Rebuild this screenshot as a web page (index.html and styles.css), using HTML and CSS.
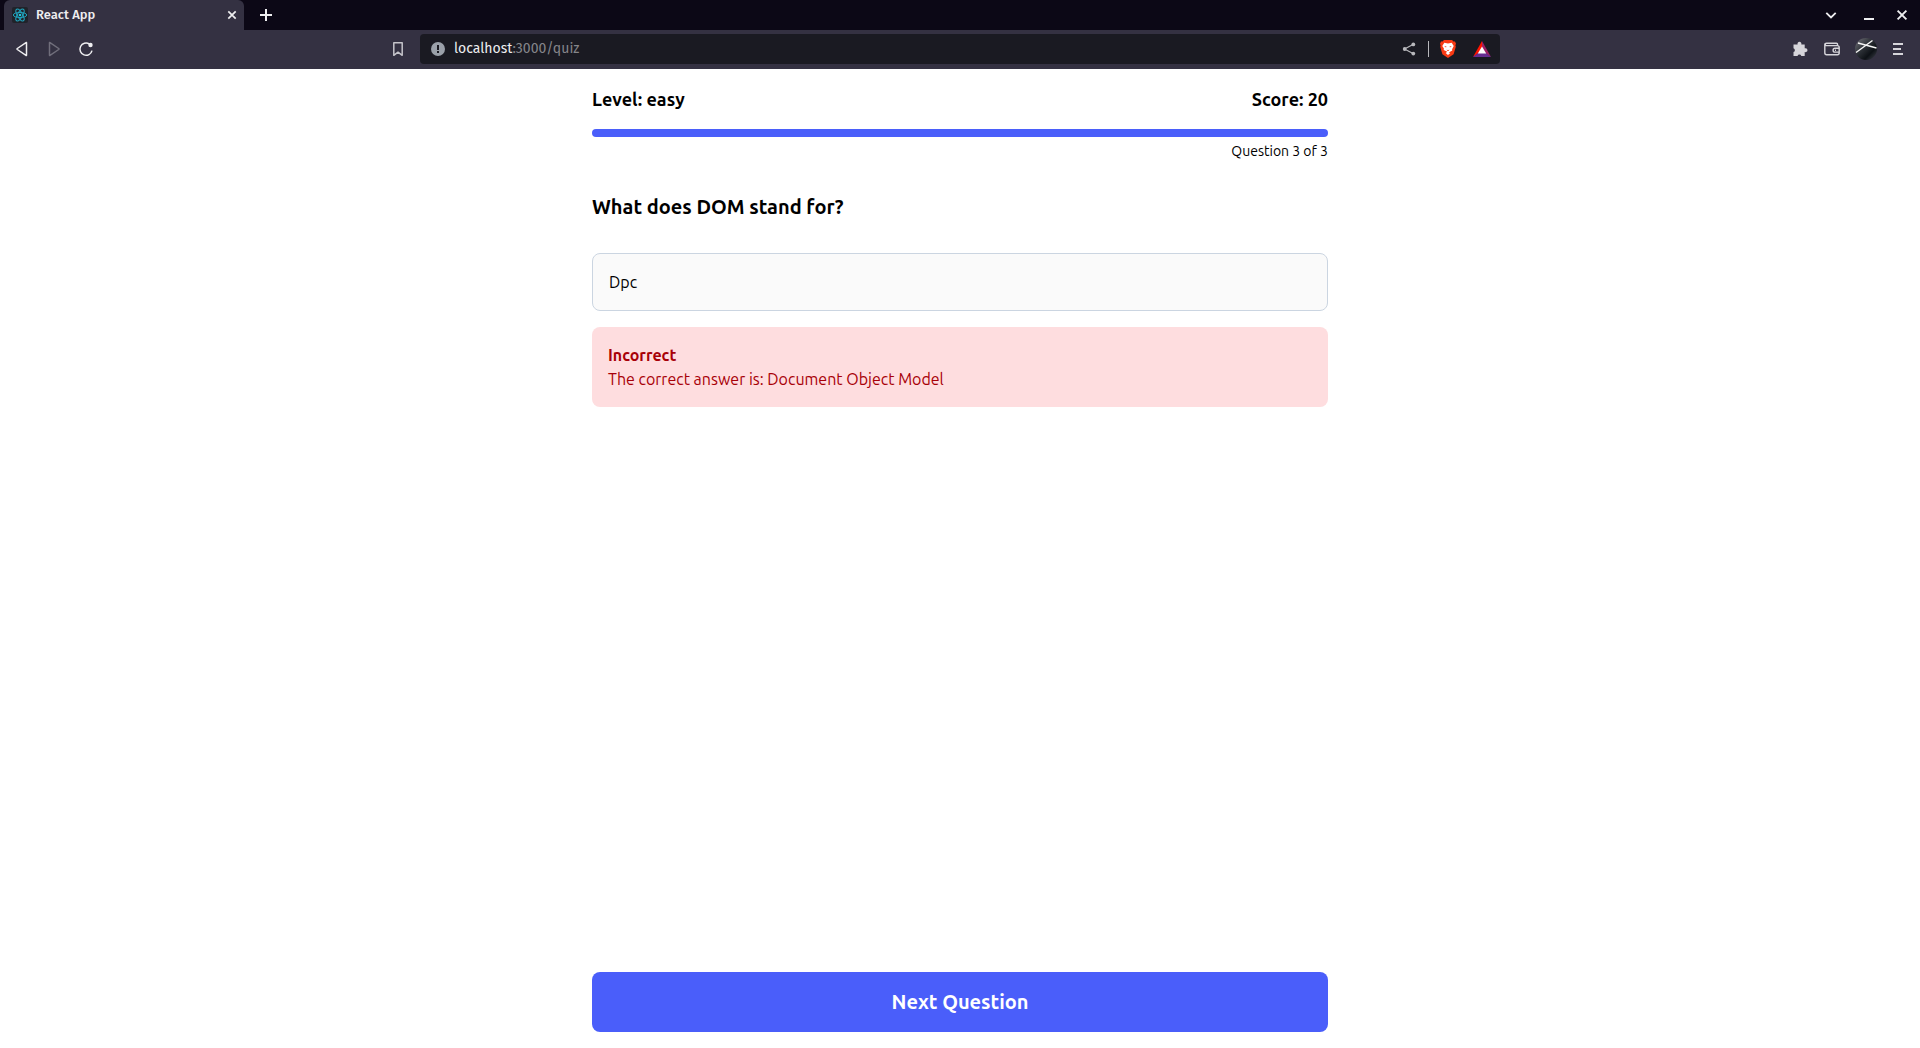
FILE: index.html
```
<!DOCTYPE html>
<html lang="en">
<head>
<meta charset="utf-8">
<meta name="viewport" content="width=device-width, initial-scale=1">
<title>React App</title>
<link rel="stylesheet" href="styles.css">
</head>
<body>
<header class="browser">
  <div class="tab-strip">
    <div class="tab">
      <svg class="favicon" width="16" height="16" viewBox="0 0 16 16" fill="none" stroke="#20a5bf" aria-hidden="true">
        <rect width="16" height="16" rx="2" fill="#20232a" stroke="none"/>
        <ellipse cx="8" cy="8" rx="6.7" ry="2.6"/>
        <ellipse cx="8" cy="8" rx="6.7" ry="2.6" transform="rotate(60 8 8)"/>
        <ellipse cx="8" cy="8" rx="6.7" ry="2.6" transform="rotate(120 8 8)"/>
        <circle cx="8" cy="8" r="1.3" fill="#20c5df" stroke="none"/>
      </svg>
      <span class="tab-title">React App</span>
      <button class="icon-button tab-close" aria-label="Close tab">
        <svg width="10" height="10" viewBox="0 0 10 10" fill="none" stroke="currentColor" stroke-width="1.7"><path d="M1.3 1.3l7.4 7.4M8.7 1.3L1.3 8.7"/></svg>
      </button>
    </div>
    <button class="icon-button new-tab" aria-label="New tab">
      <svg width="12" height="12" viewBox="0 0 12 12" fill="none" stroke="currentColor" stroke-width="2"><path d="M6 0v12M0 6h12"/></svg>
    </button>
    <div class="window-controls">
      <button class="icon-button" aria-label="Search tabs">
        <svg width="12" height="12" viewBox="0 0 12 12" fill="none" stroke="currentColor" stroke-width="1.8"><path d="M1.3 3.8L6 8.5l4.700-4.700"/></svg>
      </button>
      <button class="icon-button minimise" aria-label="Minimise">
        <svg width="12" height="12" viewBox="0 0 12 12" fill="currentColor"><path d="M1 9h10v2H1z"/></svg>
      </button>
      <button class="icon-button" aria-label="Close window">
        <svg width="12" height="12" viewBox="0 0 12 12" fill="none" stroke="currentColor" stroke-width="1.9"><path d="M1.600 1.600l8.800 8.800M10.400 1.600l-8.800 8.800"/></svg>
      </button>
    </div>
  </div>
  <div class="toolbar">
    <div class="navigation">
      <button class="icon-button" aria-label="Back">
        <svg width="16" height="16" viewBox="0 0 16 16" fill="none" stroke="currentColor" stroke-width="1.500" stroke-linejoin="round"><path d="M12.500 1.700v12.600c0 .3-.3.300-.500.100L3.300 8.500q-.700-.500 0-1L12 1.600c.3-.2.500-.1.500.1z"/></svg>
      </button>
      <button class="icon-button" aria-label="Forward" disabled>
        <svg width="16" height="16" viewBox="0 0 16 16" fill="none" stroke="currentColor" stroke-width="1.500" stroke-linejoin="round"><path d="M3.500 1.700v12.600c0 .3.3.300.500.100l8.700-5.900q.700-.500 0-1L4 1.600c-.3-.2-.5-.1-.5.1z"/></svg>
      </button>
      <button class="icon-button" aria-label="Reload">
        <svg width="16" height="16" viewBox="0 0 16 16" fill="none" stroke="currentColor" stroke-width="1.500"><path d="M11.300 3A6.100 6.100 0 1 0 14 9.600"/><circle cx="12.500" cy="4" r="2.200" fill="currentColor" stroke="none"/></svg>
      </button>
      <button class="icon-button bookmark" aria-label="Bookmark this page">
        <svg width="16" height="16" viewBox="0 0 16 16" fill="none" stroke="currentColor" stroke-width="1.500" stroke-linejoin="round"><path d="M3.800 1.700h8.400v12.600L8 11.200l-4.200 3.100z"/></svg>
      </button>
    </div>
    <div class="address">
      <svg width="14" height="14" viewBox="0 0 14 14" aria-hidden="true"><circle cx="7" cy="7" r="7" fill="#9aa0a9"/><path d="M6 3h2v5H6zM6 9h2v2H6z" fill="#1a1a22"/></svg>
      <span class="url">localhost<span class="url-path">:3000/quiz</span></span>
      <button class="icon-button share" aria-label="Share">
        <svg width="14" height="14" viewBox="0 0 14 14" fill="currentColor" stroke="currentColor"><path d="M11.500 2.300L2.500 7l9 4.700" fill="none" stroke-width="1.200"/><g stroke="none"><circle cx="11.300" cy="2.400" r="1.900"/><circle cx="2.700" cy="7" r="1.900"/><circle cx="11.300" cy="11.600" r="1.900"/></g></svg>
      </button>
      <span class="divider"></span>
      <button class="icon-button shields" aria-label="Shields">
        <svg width="16" height="18" viewBox="0 0 16 18"><path d="M4 0h8l1.500 1.600 1.500-.2 1 2.400-.6 1.500.4 1.500-2.200 7.500L8 18l-5.600-3.700L.2 6.800l.4-1.500L0 3.800l1-2.400 1.500.2z" fill="#f93a14"/><path d="M4.300 2.800L8 3.400l3.700-.6 2 3.200-1.600 3.200.2 1.400-2.600 1.300-.9.500L10.300 13 8 15l-2.300-2 1.500-1.200-.9-.5-2.600-1.300.2-1.400L2.300 6z" fill="#fff"/><path d="M4.200 6l2.300.5-.5 1zM11.800 6l-2.300.5.5 1zM6.600 9.600L8 10.300l1.400-.7-.9 1.400h-1z" fill="#f93a14"/></svg>
      </button>
      <button class="icon-button" aria-label="Rewards">
        <svg width="18" height="16" viewBox="0 0 18 16"><path d="M9 0L0 16l9-6z" fill="#ff1400"/><path d="M9 0l9 16-9-6z" fill="#9e1f63"/><path d="M0 16h18l-9-7z" fill="#662d91"/><path d="M9 5.600l4.200 7H4.800z" fill="#fff"/></svg>
      </button>
    </div>
    <div class="extensions">
      <button class="icon-button" aria-label="Extensions">
        <svg width="16" height="16" viewBox="0 0 16 16" fill="currentColor"><path d="M1.500 3.500h4.100a2 2 0 1 1 3.700 0h3.400v3.800a2 2 0 1 1 0 3.700v4H9.300a2 2 0 0 0-3.800 0h-4v-3.900a2 2 0 0 0 0-3.800z"/></svg>
      </button>
      <button class="icon-button" aria-label="Wallet">
        <svg width="16" height="16" viewBox="0 0 16 16" fill="none" stroke="currentColor" stroke-width="1.400" stroke-linejoin="round"><path d="M13.500 4.600V3.200q0-1-1-1H2.600Q.8 2.200.8 3.900v7.900q0 1.900 1.800 1.900h10.800q1.800 0 1.800-1.900V6.500q0-1.900-1.800-1.900H2.500q-1.300 0-1.500-1M15 7.300h-4a1.900 1.900 0 0 0 0 3.800h4M11 9.200h1"/></svg>
      </button>
      <button class="icon-button avatar" aria-label="Profile">
        <svg width="22" height="22" viewBox="0 0 22 22"><defs><linearGradient id="avatar-shade" x2="1" y2="1"><stop stop-color="#77777e"/><stop offset=".4" stop-color="#30343a"/><stop offset=".7" stop-color="#0d1116"/><stop offset="1" stop-color="#444850"/></linearGradient></defs><circle cx="11" cy="11" r="11" fill="url(#avatar-shade)"/><path d="M1 14.500L17.500 2.500M3 5l18.500 5" stroke="#f4f4f4" stroke-width="1.400"/></svg>
      </button>
      <button class="icon-button menu" aria-label="Menu">
        <svg width="12" height="12" viewBox="0 0 12 12" fill="currentColor"><path d="M1 0h10v2H1zM1 5h8v2H1zM1 10h10v2H1z"/></svg>
      </button>
    </div>
  </div>
</header>
<main class="quiz">
  <div class="status">
    <span>Level: easy</span>
    <span>Score: 20</span>
  </div>
  <div class="progress" role="progressbar" aria-label="Quiz progress" aria-valuemin="0" aria-valuemax="3" aria-valuenow="3"><div class="progress-fill" style="width: 100%"></div></div>
  <p class="counter">Question 3 of 3</p>
  <h1 class="question"><label for="answer">What does DOM stand for?</label></h1>
  <input class="answer" id="answer" type="text" value="Dpc">
  <section class="feedback" role="status">
    <strong>Incorrect</strong>
    <p>The correct answer is: Document Object Model</p>
  </section>
  <button class="next">Next Question</button>
</main>
</body>
</html>
```
FILE: styles.css
```
* { box-sizing: border-box; }

body {
  min-height: 100vh;
  margin: 0;
  display: flex;
  flex-direction: column;
  background: #fff;
  color: #000;
  font: 16px/24px Ubuntu, "Noto Sans", sans-serif;
}

p, h1 { margin: 0; }

svg { display: block; flex: none; }

.browser {
  color: #eeeef0;
  font: 14px/20px "Fira Sans", "Noto Sans", sans-serif;
}

.tab-strip {
  display: flex;
  align-items: center;
  height: 30px;
  padding: 0 12px 0 4px;
  background: #0c0816;
}

.tab {
  display: flex;
  align-items: center;
  width: 240px;
  height: 30px;
  padding: 0 7px 0 8px;
  border-radius: 6px 6px 0 0;
  background: #343142;
}

.tab-title {
  flex: 1;
  margin-left: 8px;
  font-size: 13px;
  font-weight: 500;
}

.icon-button {
  display: flex;
  padding: 0;
  border: 0;
  background: none;
  color: inherit;
}

.icon-button:disabled { color: #706e7b; }

.new-tab { margin-left: 16px; }

.window-controls {
  display: flex;
  gap: 21px;
  margin-left: auto;
}

.minimise { margin-left: 5px; }

.toolbar {
  display: grid;
  grid-template-columns: 1fr minmax(0, 1080px) 1fr;
  align-items: center;
  height: 39px;
  padding-bottom: 1px;
  background: #343142;
}

.navigation {
  display: flex;
  gap: 16px;
  padding: 0 14px;
}

.bookmark {
  margin-left: auto;
  color: #c5c4ca;
}

.address {
  display: flex;
  align-items: center;
  height: 30px;
  padding: 0 9px 0 11px;
  border-radius: 4px;
  background: #1a1a22;
}

.url {
  flex: 1;
  margin-left: 9px;
}

.url-path { color: #85858a; }

.share { color: #b8b8bc; }

.divider {
  width: 1px;
  height: 16px;
  margin: 0 11px 0 12px;
  background: #b8b8bc;
}

.shields { margin-right: 17px; }

.extensions {
  display: flex;
  align-items: center;
  justify-content: flex-end;
  gap: 16px;
  padding-right: 16px;
  color: #d6d5da;
}

.extensions .avatar { margin: 0 -1px; }

.quiz {
  display: flex;
  flex: 1;
  flex-direction: column;
  width: 100%;
  max-width: 768px;
  margin: 0 auto;
  padding: 16px;
}

.status {
  display: flex;
  justify-content: space-between;
  font-size: 18px;
  font-weight: 600;
  line-height: 28px;
}

.progress {
  height: 8px;
  margin-top: 16px;
  overflow: hidden;
  border-radius: 4px;
  background: #e2e8f0;
}

.progress-fill {
  height: 100%;
  background: #4a5efa;
}

.counter {
  margin-top: 4px;
  font-size: 14px;
  line-height: 20px;
  text-align: right;
}

.question {
  margin: 32px 0;
  font-size: 20px;
  font-weight: 700;
  line-height: 28px;
}

.answer {
  height: 58px;
  padding: 16px;
  border: 1px solid #cbd5e1;
  border-radius: 8px;
  background: #fafafa;
  color: inherit;
  font: inherit;
}

.feedback {
  margin: 16px 0;
  padding: 16px;
  border-radius: 8px;
  background: #fedddf;
  color: #a80008;
}

.feedback strong { font-weight: 700; }

.next {
  height: 60px;
  margin-top: auto;
  border: 0;
  border-radius: 8px;
  background: #4a5efa;
  color: #fff;
  font: inherit;
  font-size: 20px;
  font-weight: 700;
}
```
